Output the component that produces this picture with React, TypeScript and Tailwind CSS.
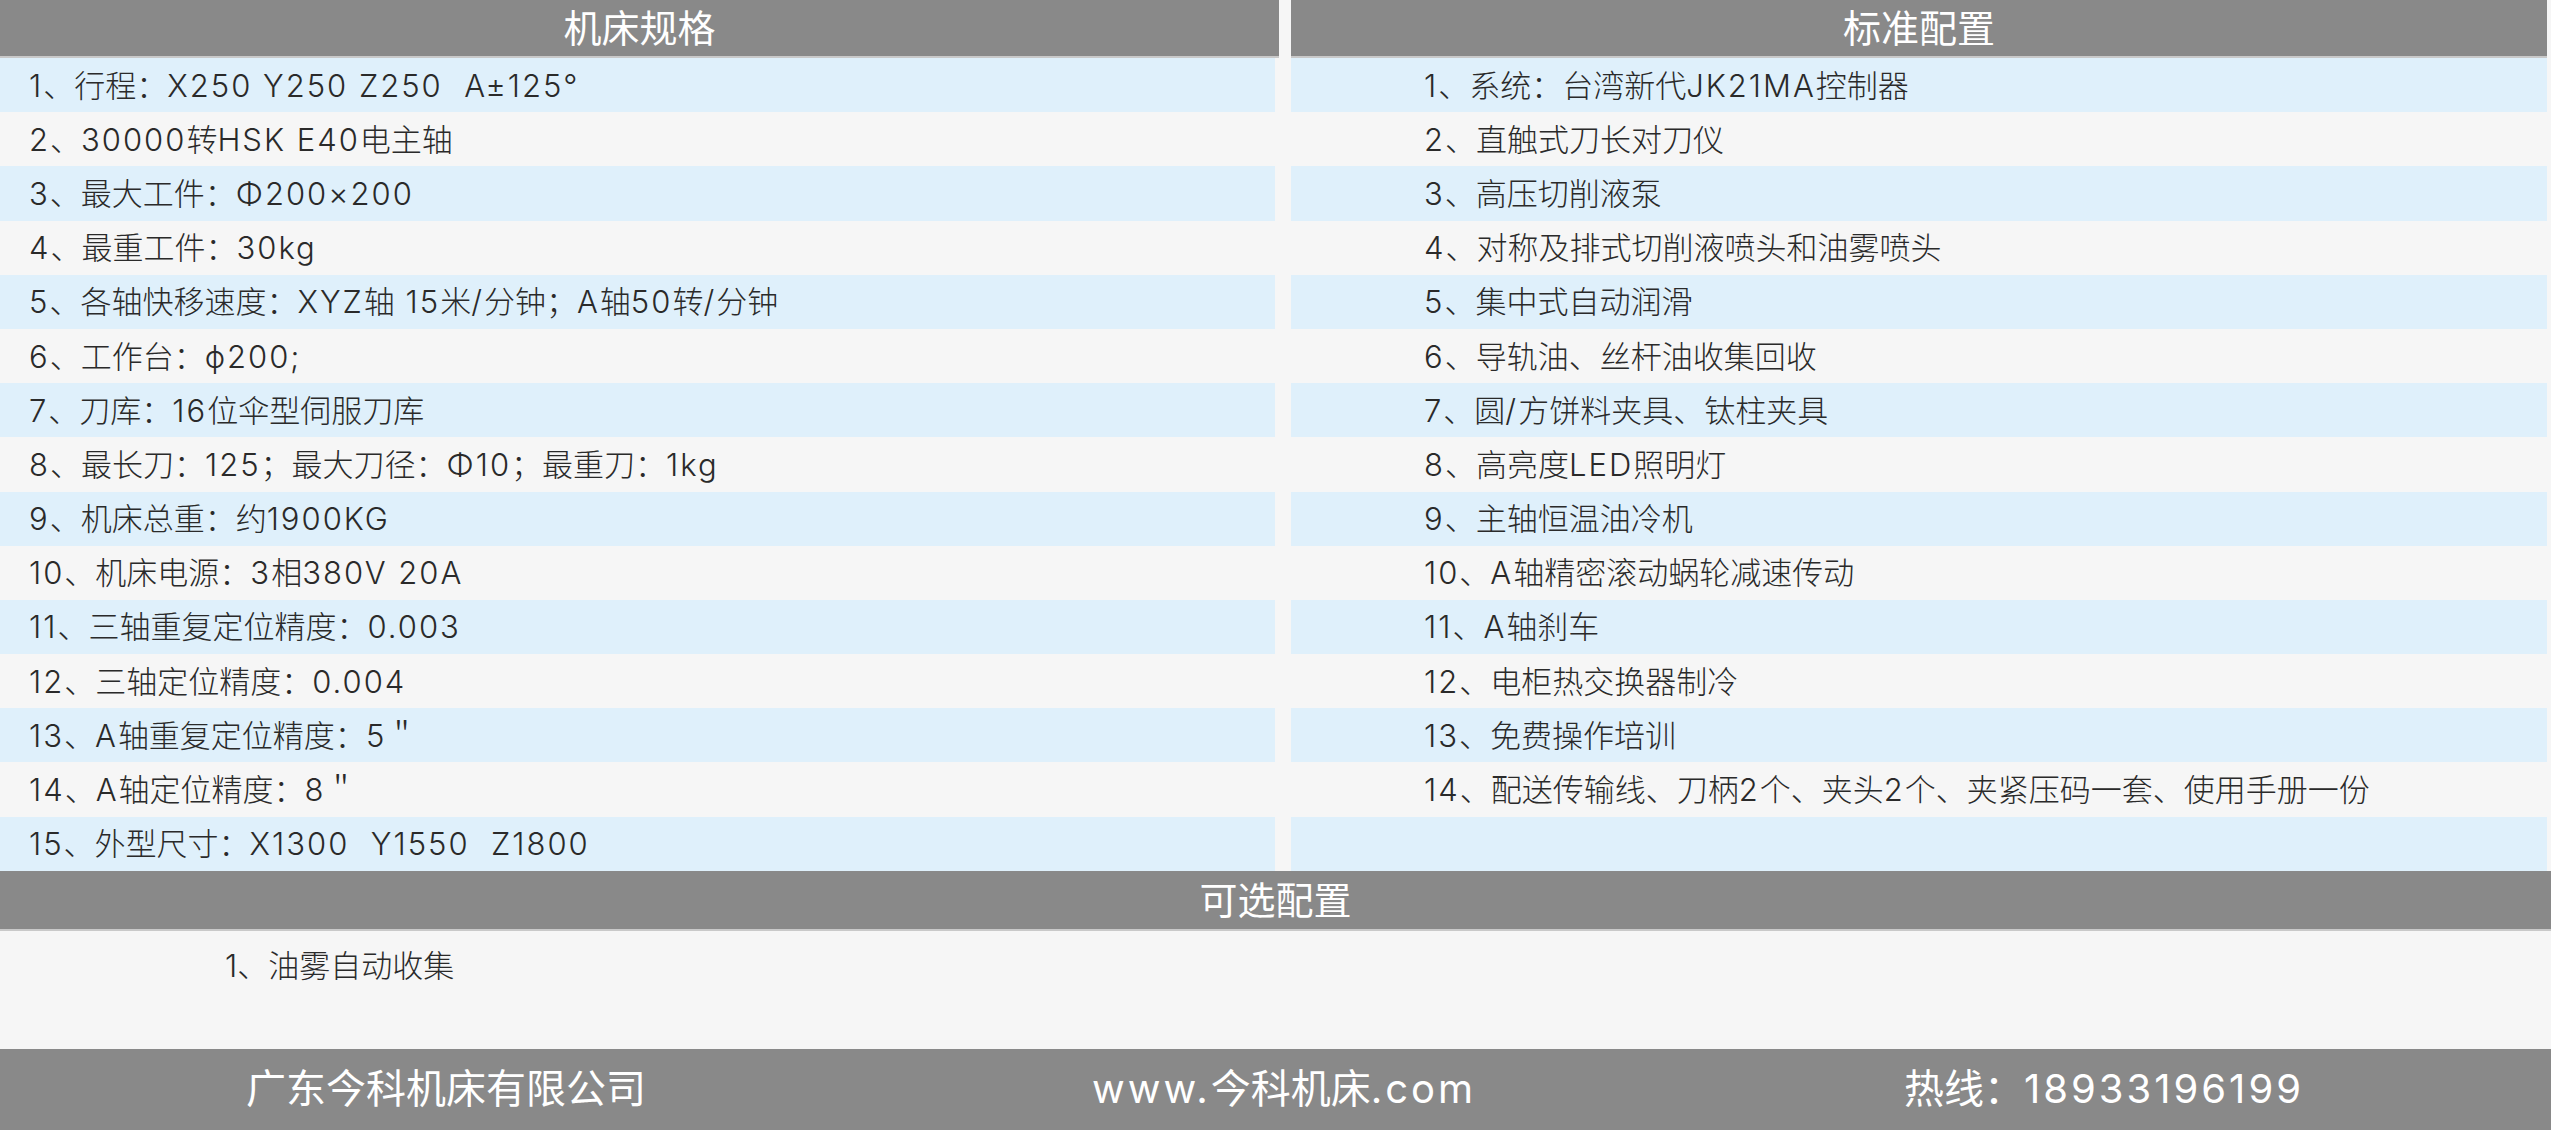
const specs = [
  '1、行程：X250 Y250 Z250  A±125°',
  '2、30000转HSK E40电主轴',
  '3、最大工件：Φ200×200',
  '4、最重工件：30kg',
  '5、各轴快移速度：XYZ轴 15米/分钟；A轴50转/分钟',
  '6、工作台：ϕ200;',
  '7、刀库：16位伞型伺服刀库',
  '8、最长刀：125；最大刀径：Φ10；最重刀：1kg',
  '9、机床总重：约1900KG',
  '10、机床电源：3相380V 20A',
  '11、三轴重复定位精度：0.003',
  '12、三轴定位精度：0.004',
  '13、A轴重复定位精度：5＂',
  '14、A轴定位精度：8＂',
  '15、外型尺寸：X1300  Y1550  Z1800',
];

const standard = [
  '1、系统：台湾新代JK21MA控制器',
  '2、直触式刀长对刀仪',
  '3、高压切削液泵',
  '4、对称及排式切削液喷头和油雾喷头',
  '5、集中式自动润滑',
  '6、导轨油、丝杆油收集回收',
  '7、圆/方饼料夹具、钛柱夹具',
  '8、高亮度LED照明灯',
  '9、主轴恒温油冷机',
  '10、A轴精密滚动蜗轮减速传动',
  '11、A轴刹车',
  '12、电柜热交换器制冷',
  '13、免费操作培训',
  '14、配送传输线、刀柄2个、夹头2个、夹紧压码一套、使用手册一份',
  '',
];

// latin runs are set a little wider than Inter gives by default
function Mixed({ text, latin }: { text: string; latin: string }) {
  const parts = text.split(/([\u3000-\u9fff\uff00-\uffef]+)/);
  return (
    <>
      {parts.map((p, i) =>
        i % 2 === 1 ? <span key={i}>{p}</span> : p ? <span key={i} className={latin}>{p}</span> : null,
      )}
    </>
  );
}

function Header({ title }: { title: string }) {
  return (
    <div className="flex h-[58px] items-center justify-center border-b-2 border-[#c9c9c9] bg-[#898989] text-[38px] text-white">
      {title}
    </div>
  );
}

function Row({ text, index, pad }: { text: string; index: number; pad: string }) {
  return (
    <div
      className={`flex h-[54.2px] items-center whitespace-pre text-[31px] font-light text-[#2a2a2a] ${pad} ${
        index % 2 === 0 ? 'bg-[#dff0fb]' : 'bg-[#f6f6f6]'
      }`}
    >
      <Mixed text={text} latin="tracking-[2px]" />
    </div>
  );
}

export default function App() {
  return (
    <div className="min-h-[1130px] w-[2551px] bg-[#f6f6f6] font-['Inter','Noto_Sans_CJK_SC',sans-serif] leading-none">
      <div className="flex">
        <div className="flex w-[1279px] flex-col">
          <Header title="机床规格" />
          <div className="w-[1275px]">
            {specs.map((s, i) => (
              <Row key={i} text={s} index={i} pad="pl-[29px]" />
            ))}
          </div>
        </div>
        <div className="ml-[12px] flex w-[1256px] flex-col">
          <Header title="标准配置" />
          {standard.map((s, i) => (
            <Row key={i} text={s} index={i} pad="pl-[133px]" />
          ))}
        </div>
      </div>

      <div className="flex h-[60px] items-center justify-center border-b-2 border-[#c9c9c9] bg-[#898989] text-[38px] text-white">
        可选配置
      </div>
      <div className="h-[118px] pl-[225px] pt-[20px] text-[31px] font-light leading-[30px] text-[#2a2a2a]">
        1、油雾自动收集
      </div>

      <div className="flex h-[81px] items-center bg-[#898989] text-[40px] text-white">
        <div className="w-[892px] text-center">广东今科机床有限公司</div>
        <div className="w-[784px] text-center">
          <Mixed text="www.今科机床.com" latin="tracking-[3px]" />
        </div>
        <div className="w-[856px] text-center">
          <Mixed text="热线：18933196199" latin="tracking-[3px]" />
        </div>
      </div>
    </div>
  );
}
